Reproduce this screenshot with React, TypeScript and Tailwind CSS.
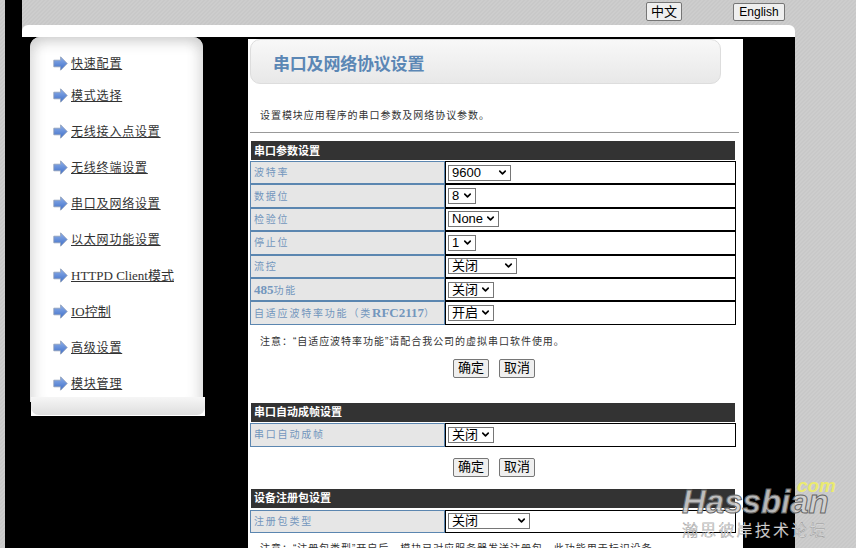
import { ChevronDown } from "lucide-react";

const CJK = "font-['Liberation_Sans','Noto_Sans_CJK_SC',sans-serif]";

const MENU = [
  { label: "快速配置", rowClass: "h-[32px]" },
  { label: "模式选择", rowClass: "h-[36px]" },
  { label: "无线接入点设置", rowClass: "h-[36px]" },
  { label: "无线终端设置", rowClass: "h-[36px]" },
  { label: "串口及网络设置", rowClass: "h-[36px]" },
  { label: "以太网功能设置", rowClass: "h-[36px]" },
  { label: "HTTPD Client模式", rowClass: "h-[36px]", latin: true },
  { label: "IO控制", rowClass: "h-[36px]", latin: true },
  { label: "高级设置", rowClass: "h-[36px]" },
  { label: "模块管理", rowClass: "h-[36px]" },
];

const SERIAL_ROWS = [
  { label: "波特率", value: "9600", width: "w-[63px]" },
  { label: "数据位", value: "8", width: "w-[28px]" },
  { label: "检验位", value: "None", width: "w-[51px]" },
  { label: "停止位", value: "1", width: "w-[28px]" },
  { label: "流控", value: "关闭", width: "w-[69px]" },
  { label: "485功能", value: "关闭", width: "w-[46px]" },
  { label: "自适应波特率功能（类RFC2117）", value: "开启", width: "w-[46px]" },
];

function MenuArrow() {
  return (
    <svg width="15" height="15" viewBox="0 0 15 15" className="shrink-0">
      <defs>
        <linearGradient id="arrowFill" x1="0" y1="0" x2="0" y2="1">
          <stop offset="0" stopColor="#8fb0ea" />
          <stop offset="1" stopColor="#3f6fc8" />
        </linearGradient>
      </defs>
      <path
        d="M0.8 4.2H7.6V0.8L14.2 7.5L7.6 14.2V10.8H0.8Z"
        fill="url(#arrowFill)"
        stroke="#8c9bb5"
        strokeWidth="0.8"
      />
    </svg>
  );
}

// 485 and RFC2117 are in a bold serif in the original page
function LabelText({ text }: { text: string }) {
  const parts = text.split(/(485|RFC2117)/);
  return (
    <>
      {parts.map((part, i) =>
        part === "485" || part === "RFC2117" ? (
          <span key={i} className="font-['Liberation_Serif',serif] text-[13px] font-bold tracking-normal">
            {part}
          </span>
        ) : (
          <span key={i}>{part}</span>
        ),
      )}
    </>
  );
}

function SectionHeader({ title, className }: { title: string; className: string }) {
  return (
    <div
      className={`flex h-[19px] w-[484px] items-center bg-[#333333] pl-[3px] text-[11px] font-bold text-white ${className}`}
    >
      <span className="pt-px">{title}</span>
    </div>
  );
}

function FormRow({
  label,
  value,
  width,
  rowClass,
}: {
  label: string;
  value: string;
  width: string;
  rowClass: string;
}) {
  return (
    <div className={`flex w-[486px] ${rowClass}`}>
      <div className="flex w-[195px] items-center border border-[#5b86b0] bg-[#e6e6e6] pl-[3px] text-[10px] tracking-[1.8px] text-[#7396bd]">
        <span className="whitespace-nowrap">
          <LabelText text={label} />
        </span>
      </div>
      <div className="flex flex-1 items-center border border-black bg-white pl-[2px]">
        <div className={`relative h-[16px] ${width}`}>
          <select
            defaultValue={value}
            className="block h-full w-full appearance-none border border-[#767676] bg-white pl-[3px] text-[13px] leading-[14px] text-black"
          >
            <option>{value}</option>
          </select>
          <ChevronDown
            size={11}
            strokeWidth={3.5}
            className="pointer-events-none absolute right-[3px] top-[2px] text-black"
          />
        </div>
      </div>
    </div>
  );
}

function ActionButtons({ className }: { className: string }) {
  return (
    <div className={`flex gap-[10px] pl-[203px] ${className}`}>
      {["确定", "取消"].map((text) => (
        <button
          key={text}
          className="flex h-[19px] w-[36px] items-center justify-center rounded-[2px] border border-[#767676] bg-[#efefef] text-[13px] text-black"
        >
          {text}
        </button>
      ))}
    </div>
  );
}

function Sidebar() {
  return (
    <aside className="ml-[8px] w-[175px] shrink-0">
      <div className="h-[365px] w-[173px] rounded-t-[10px] bg-white pt-[19px] pl-[23px] shadow-[inset_0_12px_14px_-8px_#cccccc,inset_12px_0_14px_-8px_#dddddd,inset_-12px_0_14px_-8px_#dddddd]">
        {MENU.map((item) => (
          <div key={item.label} className={`flex items-start gap-[3px] ${item.rowClass}`}>
            <MenuArrow />
            <a
              className={`whitespace-nowrap text-[12px] leading-[15px] text-[#333333] underline ${
                item.latin
                  ? "font-['Liberation_Serif','Noto_Sans_CJK_SC',serif] text-[13px]"
                  : "mt-px tracking-[0.8px]"
              }`}
            >
              {item.label}
            </a>
          </div>
        ))}
      </div>
      <div className="relative -mt-[5px] ml-[1px] h-[19px] w-[174px] bg-white pb-[1px]">
        <div className="h-full rounded-b-[8px] bg-gradient-to-b from-[#f6f6f6] to-[#dedede]" />
      </div>
    </aside>
  );
}

function MainPanel() {
  return (
    <main className="ml-[43px] mt-[2px] w-[495px] shrink-0 bg-white pl-[2px]">
      <div className="flex h-[45px] w-[471px] items-center rounded-[10px] border border-[#dddddd] bg-gradient-to-b from-[#f8f8f8] to-[#e8e8e8] pl-[22px] pt-[6px] text-[17px] font-bold tracking-[-0.2px] text-[#5b87b5]">
        串口及网络协议设置
      </div>
      <p className="mt-[24px] h-[16px] pl-[10px] text-[10px] leading-[16px] tracking-[0.95px] text-[#333333]">
        设置模块应用程序的串口参数及网络协议参数。
      </p>
      <div className="mt-[8px] h-px w-[489px] bg-[#999999]" />

      <SectionHeader title="串口参数设置" className="ml-px mt-[8px]" />
      <div className="mt-px">
        {SERIAL_ROWS.map((row) => (
          <FormRow key={row.label} {...row} rowClass="h-[23.4px]" />
        ))}
      </div>
      <p className="mt-[9px] h-[16px] pl-[10px] text-[10px] leading-[16px] tracking-[0.97px] text-[#333333]">
        注意：“自适应波特率功能”请配合我公司的虚拟串口软件使用。
      </p>
      <ActionButtons className="mt-[9px]" />

      <SectionHeader title="串口自动成帧设置" className="ml-px mt-[25px]" />
      <div className="mt-px">
        <FormRow label="串口自动成帧" value="关闭" width="w-[46px]" rowClass="h-[24px]" />
      </div>
      <ActionButtons className="mt-[11px]" />

      <SectionHeader title="设备注册包设置" className="ml-px mt-[12px]" />
      <div className="mt-[2px]">
        <FormRow label="注册包类型" value="关闭" width="w-[82px]" rowClass="h-[23.5px]" />
      </div>
      <p className="mt-[8px] h-[16px] whitespace-nowrap pl-[10px] text-[10px] leading-[16px] tracking-[0.97px] text-[#333333]">
        注意：“注册包类型”开启后，模块已对应服务器发送注册包，此功能用于标识设备。
      </p>
    </main>
  );
}

function Watermark() {
  return (
    <div className="pointer-events-none absolute right-[24px] top-[477px] w-[150px]">
      <div className="pt-[6px] font-['Liberation_Sans',sans-serif] text-[33px] font-bold italic leading-[37px] text-[#d2d2d2]/90 [-webkit-text-stroke:1px_#666666]">
        Hassbian
      </div>
      <div className="mt-[2px] whitespace-nowrap text-[16px] leading-[18px] tracking-[2.2px] text-[#d4d4d4] [-webkit-text-stroke:0.2px_#666666]">
        瀚思彼岸技术论坛
      </div>
      <div className="absolute right-[-4px] top-0 font-['Liberation_Sans',sans-serif] text-[19px] font-bold italic leading-[17px] text-[#eaea70]">
        com
      </div>
    </div>
  );
}

export default function App() {
  return (
    <div
      className={`relative flex h-[548px] w-[856px] overflow-hidden bg-[repeating-linear-gradient(135deg,#c8c8c8_0,#c8c8c8_1.414px,#cdcdcd_1.414px,#cdcdcd_2.828px)] ${CJK}`}
    >
      <div className="ml-[5px] w-[17px] shrink-0 bg-black" />
      <div className="flex w-[773px] shrink-0 flex-col">
        <div className="flex h-[25px] shrink-0 pl-[624px]">
          <button className="mt-[2px] h-[19px] w-[36px] rounded-[2px] border border-[#767676] bg-[#efefef] text-[13px] leading-none text-black">
            中文
          </button>
          <button className="ml-[51px] mt-[3px] h-[18px] w-[52px] rounded-[2px] border border-[#767676] bg-[#efefef] text-[12px] leading-none text-black">
            English
          </button>
        </div>
        <div className="h-[12px] shrink-0 rounded-t-[6px] bg-white" />
        <div className="flex flex-1 bg-black">
          <Sidebar />
          <MainPanel />
        </div>
      </div>
      <Watermark />
    </div>
  );
}
